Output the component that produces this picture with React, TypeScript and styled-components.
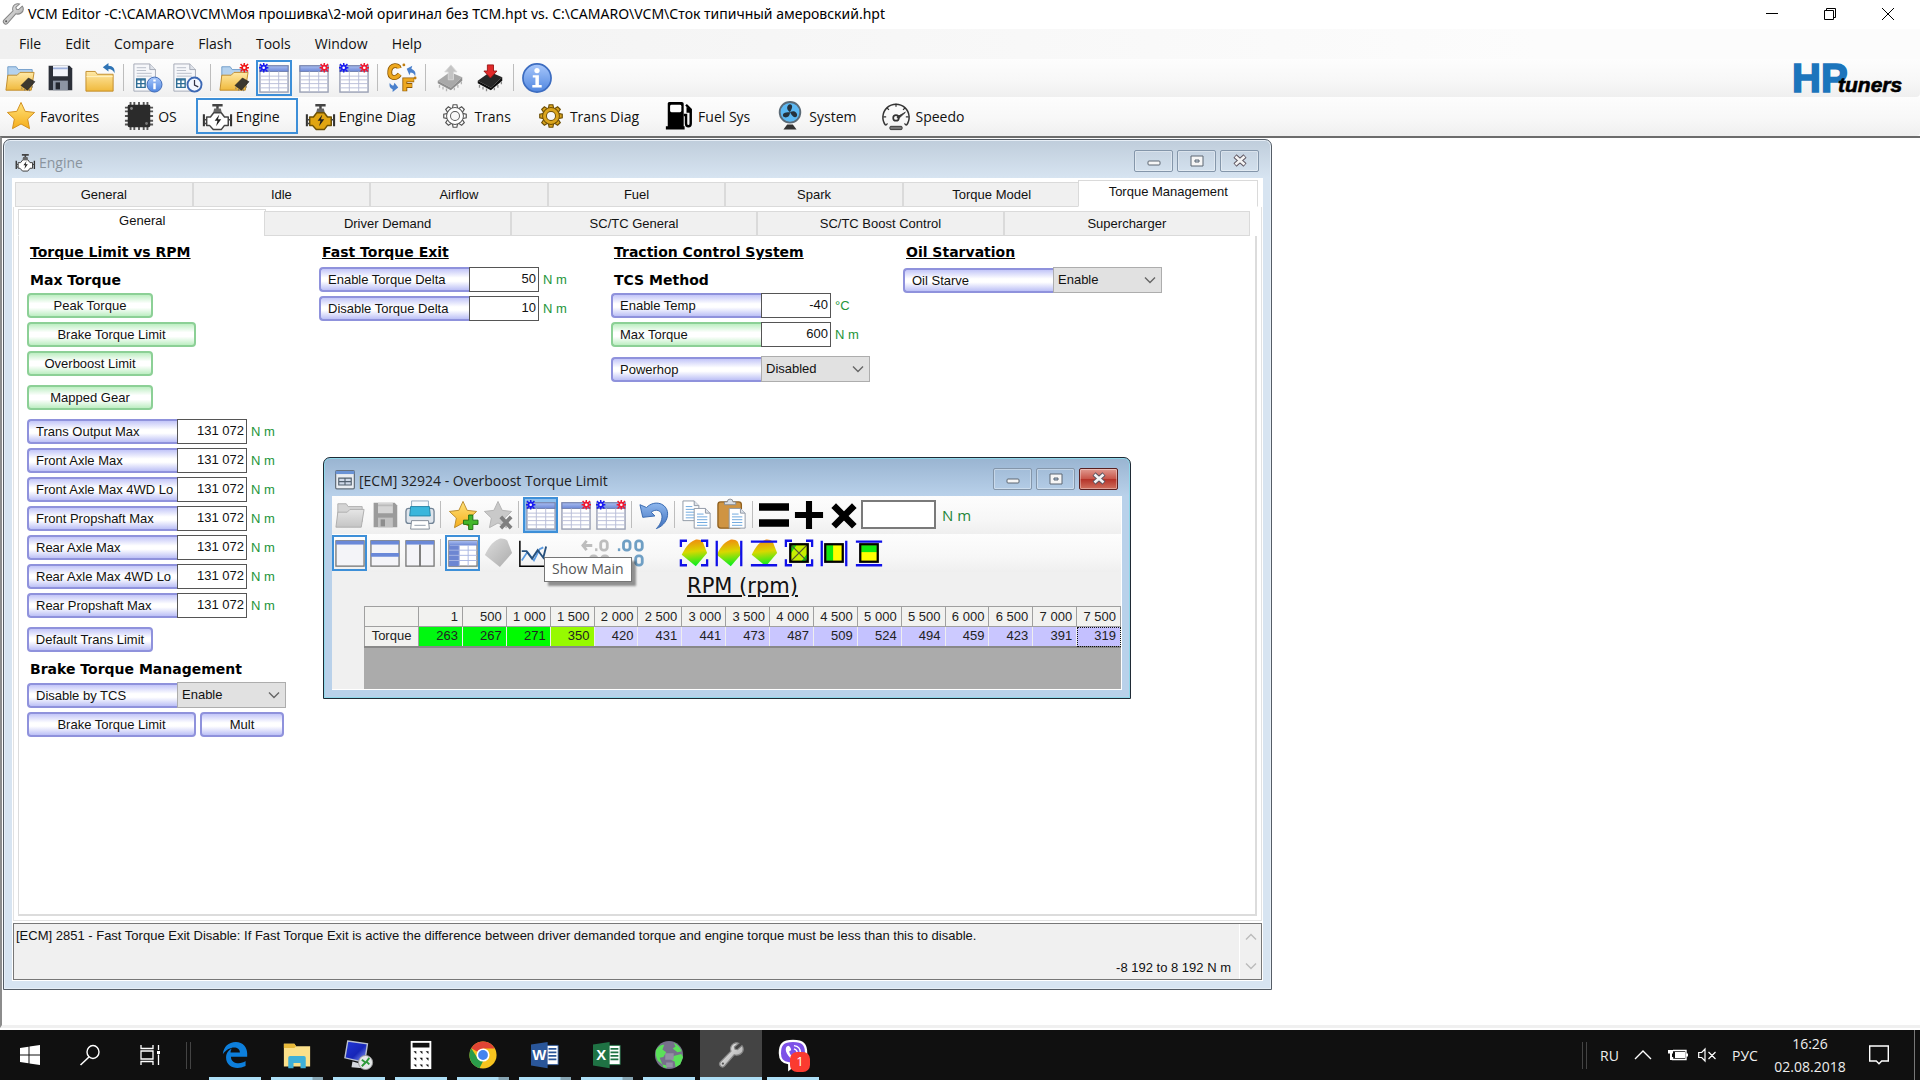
import React from "react";
import styled, { createGlobalStyle, css } from "styled-components";

const UI = '"Open Sans", "Noto Sans", sans-serif';
const ARIAL = '"Liberation Sans", Arial, sans-serif';
const HEAD = '"DejaVu Sans", Verdana, sans-serif';

const GlobalStyle = createGlobalStyle`
  *, *::before, *::after { box-sizing: border-box; }
  body { margin: 0; background: #fff; font-family: ${UI}; font-size: 14px; color: #111; }
  button, input, select { font: inherit; color: inherit; margin: 0; padding: 0; border: 0; background: none; border-radius: 0; }
  h1, h2, h3, p { margin: 0; font-weight: inherit; font-size: inherit; }
  svg { display: block; flex: none; overflow: visible; }
`;

/* ---------- icons ---------- */

type IconProps = { size?: number; children?: React.ReactNode; box?: string };
const Svg = ({ size = 30, box = "0 0 32 32", children }: IconProps) => (
  <svg width={size} height={size} viewBox={box} fill="none" aria-hidden="true">{children}</svg>
);

const Gradients = () => (
  <svg width="0" height="0" aria-hidden="true">
    <defs>
      <linearGradient id="fold" x1="0" y1="0" x2="0" y2="1"><stop offset="0" stopColor="#ffe9a6" /><stop offset="1" stopColor="#f0b93c" /></linearGradient>
      <linearGradient id="foldGray" x1="0" y1="0" x2="0" y2="1"><stop offset="0" stopColor="#e6e6e6" /><stop offset="1" stopColor="#c4c4c4" /></linearGradient>
      <linearGradient id="star" x1="0" y1="0" x2="0" y2="1"><stop offset="0" stopColor="#ffe27a" /><stop offset="1" stopColor="#f5ae1c" /></linearGradient>
      <linearGradient id="info" x1="0" y1="0" x2="0" y2="1"><stop offset="0" stopColor="#a9c8fb" /><stop offset="1" stopColor="#4f86e0" /></linearGradient>
      <linearGradient id="head" x1="0" y1="0" x2="0" y2="1"><stop offset="0" stopColor="#a9bdf0" /><stop offset="1" stopColor="#6d88d6" /></linearGradient>
      <linearGradient id="heat" x1="0.4" y1="0" x2="0.5" y2="1"><stop offset="0" stopColor="#f08a10" /><stop offset="0.45" stopColor="#d8d800" /><stop offset="1" stopColor="#00f020" /></linearGradient>
      <linearGradient id="gem" x1="0" y1="0" x2="1" y2="1"><stop offset="0" stopColor="#dcdcdc" /><stop offset="1" stopColor="#acacac" /></linearGradient>
      <linearGradient id="undo" x1="0" y1="0" x2="0" y2="1"><stop offset="0" stopColor="#8fb8ee" /><stop offset="1" stopColor="#3f70bd" /></linearGradient>
      <linearGradient id="metal" x1="0" y1="0" x2="1" y2="1"><stop offset="0" stopColor="#f4f4f4" /><stop offset="1" stopColor="#a0a0a0" /></linearGradient>
      <linearGradient id="screen" x1="0" y1="0" x2="1" y2="1"><stop offset="0" stopColor="#2338d8" /><stop offset="0.55" stopColor="#1726b8" /><stop offset="1" stopColor="#9fb4ff" /></linearGradient>
    </defs>
  </svg>
);

const Chiplet = ({ x = 16, y = 16 }) => (
  <g transform={`translate(${x} ${y})`}>
    <path d="M1 9 9 1l7 4-8 9z" fill="#2c2c2c" stroke="#111" strokeWidth="0.6" opacity="0.92" />
    <path d="M2 11v2M5 12.500v2M10 13v2M13 9.500v2" stroke="#777" />
  </g>
);
const FolderBase = ({ gray = false }: { gray?: boolean }) => (
  <g strokeLinejoin="round">
    <path d="M3 24V4h9l2 3h15v16z" fill={gray ? "#d4d4d4" : "#b5d2ee"} stroke={gray ? "#b0b0b0" : "#6f9cc9"} />
    <path d="M1 29 3 13h10l3-3h15l-3 19z" fill={gray ? "url(#foldGray)" : "url(#fold)"} stroke={gray ? "#adadad" : "#c08b2a"} />
  </g>
);
const Spark = ({ x, color }: { x: number; color: string }) => (
  <g transform={`translate(${x} 0)`} stroke={color}>
    <path d="M1 1 9 9M9 1 1 9M5 0v10M0 5h10" strokeWidth="1.600" />
    <rect x="2.500" y="2.500" width="5" height="5" fill={color} transform="rotate(45 5 5)" />
    <circle cx="5" cy="5" r="1.400" fill="#fff" stroke="none" />
  </g>
);
const OpenIcon = () => <Svg><FolderBase /><Chiplet x={16} y={15} /></Svg>;
const OpenCompareIcon = () => <Svg><FolderBase /><Chiplet x={16} y={15} /><Spark x={22} color="#f01818" /></Svg>;
const FolderGrayIcon = () => <Svg><FolderBase gray /></Svg>;
const FolderBackIcon = () => (
  <Svg>
    <path d="M1 30V9h10l2 3h17v18z" fill="url(#fold)" stroke="#c08b2a" strokeLinejoin="round" />
    <path d="M1.500 14.500h28" stroke="#fff3c8" />
    <path d="M19 4.500 25 0v3c5 0 7 3 6.500 8C30 7.500 28 6.500 25 6.500V9z" fill="#2f74b5" />
  </Svg>
);
const SaveIcon = ({ gray = false }: { gray?: boolean }) => (
  <Svg size={28}>
    <path d="M3 2h24l3 3v25H3z" fill={gray ? "#9b9b9b" : "#2b2f38"} />
    <path d="M8 2h17v12H8z" fill={gray ? "#d5d5d5" : "#f2f4fa"} />
    <path d="M8 5h17" stroke={gray ? "#bbb" : "#9db0dc"} strokeWidth="2" />
    <path d="M8 19h17v11H8z" fill={gray ? "#c2c2c2" : "#8d95a3"} />
    <path d="M11 21h5v8h-5z" fill={gray ? "#8e8e8e" : "#23262e"} />
  </Svg>
);
const DocBase = () => (
  <g>
    <path d="M2 1h17l6 6v23H2z" fill="#f6f7fa" stroke="#a3a9b4" />
    <path d="M19 1v6h6" fill="#dfe3ea" stroke="#a3a9b4" />
    <path d="M5 5h10M5 8h10M5 11h16M5 14h16" stroke="#b8bdc8" />
    <path d="M5 17h9v9H5z" fill="#fff" stroke="#2f6e96" strokeWidth="1.500" /><path d="M5 18h9M5 22h9M9.500 17v9" stroke="#2f6e96" strokeWidth="1.500" />
  </g>
);
const DocInfoIcon = () => (
  <Svg><DocBase /><circle cx="24" cy="23" r="8" fill="url(#info)" stroke="#3c68b4" /><path d="M24 21.500v6.500M24 17.500v2.300" stroke="#fff" strokeWidth="2.600" /></Svg>
);
const DocClockIcon = () => (
  <Svg><DocBase /><circle cx="24" cy="23" r="7.500" fill="#f3f7ff" stroke="#3c68b4" strokeWidth="2" /><path d="M24 18v5.500l4 2" stroke="#334" strokeWidth="1.300" /></Svg>
);
const TableIcon = ({ blue = false, red = false }: { blue?: boolean; red?: boolean }) => (
  <Svg>
    <rect x="1" y="3" width="30" height="28" fill="#fff" stroke="#9aa0b4" strokeWidth="1.500" />
    <rect x="1" y="3" width="30" height="6" fill="url(#head)" stroke="#6f7fae" />
    <path d="M1 14h30M1 18h30M1 22h30M1 26.500h30M11 9v22M21 9v22" stroke="#b7bdd8" />
    {blue && <Spark x={0} color="#1a1af0" />}
    {red && <Spark x={22} color="#f01830" />}
  </Svg>
);
const UnitsIcon = () => (
  <Svg>
    <path d="M13 5.500C12.500 2 4 1 3 8.500S9 18 13.500 12" stroke="#8f5a06" strokeWidth="5.200" />
    <path d="M13 5.500C12.500 2 4 1 3 8.500S9 18 13.500 12" stroke="#eda820" strokeWidth="3.400" />
    <path d="M19 30V18h10M19 24h8" stroke="#8f5a06" strokeWidth="5.200" />
    <path d="M19 29.500V18h9.500M19 24h7.500" stroke="#eda820" strokeWidth="3.400" />
    <path d="m21 6 6-3-1 3c4 2 5 4 4 8-1-3-3-4-5-4l-1 3z" fill="#4a80cc" />
    <path d="m12 26-6 5 0-3c-3-1-4-4-3-7 1 2 2 3 4 3l1-3z" fill="#4a80cc" />
    <circle cx="18" cy="2" r="1.500" fill="#c07d10" /><circle cx="30" cy="16" r="1.500" fill="#c07d10" />
  </Svg>
);
const ChipArrowIcon = ({ gray = false }: { gray?: boolean }) => (
  <Svg size={28}>
    <path d="M2 19 16 9l14 6-13 12z" fill={gray ? "#a9a9a9" : "#262626"} />
    <path d="m2 19 15 8v3L2 22zM30 15v4L17 30v-3z" fill={gray ? "#8e8e8e" : "#0d0d0d"} />
    <path d="M4 24v3M8 26v3M12 28v3M21 27v3M25 24v3M29 20v3" stroke={gray ? "#b5b5b5" : "#8a8a8a"} strokeWidth="1.500" />
    {gray
      ? <path d="M17 1 24 9h-4v9h-6V9h-4z" fill="#c4c4c4" stroke="#d8d8d8" />
      : <path d="M13 1h7v7h4l-7.500 8L9 8h4z" fill="#e02a2a" stroke="#981313" />}
  </Svg>
);
const InfoIcon = () => (
  <Svg>
    <circle cx="16" cy="16" r="15" fill="url(#info)" stroke="#3c6cc0" strokeWidth="1.800" />
    <circle cx="16" cy="8" r="2.800" fill="#fff" />
    <path d="M11.500 13H18v10.500h3V26h-10v-2.500h3.300V15.500h-2.800z" fill="#fff" />
  </Svg>
);
const STAR = "M16 1.500 20.400 11l10.100 1.200-7.400 7 2 10.300L16 24.500l-9.100 5 2-10.300-7.400-7L11.600 11z";
const StarIcon = () => <Svg><path d={STAR} fill="url(#star)" stroke="#d08d1c" strokeLinejoin="round" /></Svg>;
const StarAddIcon = () => (
  <Svg><path d={STAR} fill="url(#star)" stroke="#b98a2c" strokeLinejoin="round" /><path d="M22 16h4.500v5.500H32V26h-5.500v5.500H22V26h-5.500v-4.500H22z" fill="#43b72a" stroke="#1d6e12" /></Svg>
);
const StarRemoveIcon = () => (
  <Svg><path d={STAR} fill="#c9c9c9" stroke="#b2b2b2" strokeLinejoin="round" /><path d="m19 18 11 12M30 18 19 30" stroke="#7f7f7f" strokeWidth="4" /></Svg>
);
const CpuIcon = () => (
  <Svg>
    <path d="M7 1v30M11 1v30M16 1v30M21 1v30M25 1v30M1 7h30M1 11h30M1 16h30M1 21h30M1 25h30" stroke="#555" strokeWidth="2" />
    <rect x="4" y="4" width="24" height="24" rx="1.500" fill="#2b2b2b" />
    <circle cx="8" cy="8" r="1.500" fill="#888" /><circle cx="24" cy="24" r="1.500" fill="#777" />
  </Svg>
);
const EngineIcon = ({ gold = false, size = 30 }: { gold?: boolean; size?: number }) => (
  <Svg size={size}>
    <path d="M11 4.500h11M16.500 5v4" stroke="#444" strokeWidth="2.600" />
    <path d="M13 8h7l1 4h-9z" fill="#666" />
    <path d="M2 14v13M31 14v13" stroke="#333" strokeWidth="2.200" />
    <path d="M5 17h4l3.500-4.500h8L24 17h4v9h-4l-3.500 4.500H12L8 26H5z" fill={gold ? "#e0a512" : "#fff"} stroke={gold ? "#6b5006" : "#444"} strokeWidth="1.600" strokeLinejoin="round" />
    <path d="M2 20h3M28 20h3M2 24h3" stroke="#444" strokeWidth="1.600" />
    <path d="m18.500 14.500-5 6.500h3l-1.500 6 5.500-7.500H17z" fill="#222" />
  </Svg>
);
const teeth = [0, 45, 90, 135, 180, 225, 270, 315];
const GearIcon = ({ gold = false }: { gold?: boolean }) => (
  <Svg size={24}>
    {teeth.map((a) => (
      <path key={a} d="M12.500 6 13.500 1h5l1 5z" transform={`rotate(${a} 16 16)`} fill={gold ? "#dba51d" : "#fff"} stroke={gold ? "#6e5008" : "#555"} strokeWidth="1.600" />
    ))}
    <circle cx="16" cy="16" r="8.600" stroke={gold ? "#6e5008" : "#555"} strokeWidth="6.500" />
    <circle cx="16" cy="16" r="8.600" stroke={gold ? "#dba51d" : "#fff"} strokeWidth="4" />
  </Svg>
);
const FuelIcon = () => (
  <Svg>
    <path d="M4 2.500A2 2 0 0 1 6 1h13a2 2 0 0 1 2 2v24h1v3.500H2V27h2z" fill="#000" />
    <rect x="6.500" y="4" width="12" height="8" rx="1.500" fill="#fff" />
    <path d="M21 15h2.500v9c0 4 5 4 5 0V9l-5-5" stroke="#000" strokeWidth="2.600" />
    <path d="M24 6.500v6h5V9z" fill="#000" />
  </Svg>
);
const FanIcon = () => (
  <Svg>
    <circle cx="16" cy="12" r="11" fill="#5cb8f2" stroke="#5b6a76" strokeWidth="2" />
    {[0, 120, 240].map((a) => <path key={a} d="M16 12c-5-3-3-8 0-8.500 3 .5 3 3.500 0 8.500" transform={`rotate(${a} 16 12)`} fill="#26323c" />)}
    <path d="M13 25h6l4 5.500H9z" fill="#333" />
  </Svg>
);
const SpeedoIcon = () => (
  <Svg>
    <path d="M5 26A14 14 0 1 1 27 26" stroke="#333" strokeWidth="1.600" />
    <path d="M16 3v3M6.500 7.500l2 2M25.500 7.500l-2 2M2.500 17h3M29.500 17h-3M5 26l2-2M27 26l-2-2" stroke="#333" strokeWidth="1.300" />
    <circle cx="16" cy="18" r="3" stroke="#333" strokeWidth="1.800" /><path d="m17 17 9-5-7.500 7z" fill="#333" stroke="#333" />
    <rect x="9.500" y="27" width="13" height="3.500" rx="1" fill="#777" stroke="#333" />
  </Svg>
);
const WrenchIcon = ({ size = 22 }: { size?: number }) => (
  <Svg size={size}>
    <path d="M29.500 4.500 24 9.500l-3-.5-.8-3L25.500 1.500C21 0 16 2.500 15.500 7.500c-.2 1.500 0 2.700.5 3.800L3 24.500c-2 2-1 4 .2 5.200s3.300 2 5-.2L20 15.700c5 1.700 11-1.500 11-6.700 0-2-.5-3.500-1.500-4.500z" fill="url(#metal)" stroke="#858585" strokeWidth="1.500" />
    <circle cx="6" cy="26.500" r="1.400" fill="#555" />
  </Svg>
);
const PrinterIcon = () => (
  <Svg>
    <path d="M7 1h18v13H7z" fill="#f6f9fc" stroke="#93a9bc" />
    <rect x="1" y="9" width="30" height="16" rx="3" fill="#dfe5ec" stroke="#728496" strokeWidth="1.400" />
    <path d="M6 7h20l1 10H5z" fill="#3ab6dc" stroke="#2283a6" />
    <path d="M7 22h18l1 9H6z" fill="#fff" stroke="#7f8a96" /><path d="M10 27h12" stroke="#8d99a6" />
  </Svg>
);
const UndoIcon = () => (
  <Svg><path d="M1 5 4 18.500 17 17l-4-4c5-4 11-2 11.500 4 .3 5-2.500 10-6 13.500C26 28 31 21 30.500 14 30 4 17-1 8 8z" fill="url(#undo)" stroke="#3466ae" strokeLinejoin="round" /></Svg>
);
const Page = ({ x, y }: { x: number; y: number }) => (
  <g transform={`translate(${x} ${y})`}>
    <path d="M0 0h12l5 5v16H0z" fill="#fff" stroke="#8d96a3" /><path d="M12 0v5h5" fill="#dde3ea" stroke="#8d96a3" />
    <path d="M3 6h7M3 9h11M3 12h11M3 15h11M3 18h11" stroke="#6aa5dd" />
  </g>
);
const CopyIcon = () => <Svg><Page x={1} y={1} /><Page x={13} y={9} /></Svg>;
const PasteIcon = () => (
  <Svg>
    <rect x="1" y="2" width="25" height="28" rx="3" fill="#cf9442" stroke="#8e5f1e" strokeWidth="1.400" />
    <path d="M8 5V2h3a3 3 0 0 1 6 0h3v3z" fill="#d9dde3" stroke="#858b94" />
    <Page x={13} y={9} />
  </Svg>
);
const EqualsIcon = () => <Svg><path d="M0 7.500h32M0 24.500h32" stroke="#000" strokeWidth="8" /></Svg>;
const PlusIcon = () => <Svg><path d="M1 16h30M16 1v30" stroke="#000" strokeWidth="6.500" /></Svg>;
const TimesIcon = () => <Svg><path d="m5 6 22 22M27 6 5 28" stroke="#000" strokeWidth="7" /></Svg>;
const PaneIcon = ({ kind }: { kind: "one" | "rows" | "cols" }) => (
  <Svg>
    <rect x="1" y="3" width="30" height="27" fill="#f4f4f8" stroke="#777" strokeWidth="1.400" />
    <path d="M1 5h30" stroke="#6a88d8" strokeWidth="4" />
    {kind === "rows" && <path d="M1 18h30" stroke="#6a88d8" strokeWidth="4" />}
    {kind === "cols" && <path d="M16 7v23" stroke="#777" strokeWidth="2" />}
  </Svg>
);
const GridIcon = () => (
  <Svg>
    <rect x="1" y="3" width="30" height="27" fill="#fff" stroke="#777" strokeWidth="1.400" />
    <path d="M1 3h30v5H1z" fill="url(#head)" /><path d="M1 8h11v22H1z" fill="#6d86d2" />
    <path d="M1 13h30M1 18.500h30M1 24h30M12 8v22M21.500 8v22" stroke="#aab6e2" />
  </Svg>
);
const GEM = "M17 1c3-1 7 0 9 2l5 13-13 15L2 18C5 12 9 4 17 1z";
const GemIcon = () => <Svg><path d={GEM} fill="url(#gem)" /></Svg>;
const ChartIcon = () => (
  <Svg><path d="M2 3v27h28" stroke="#000" strokeWidth="1.600" /><path d="m4 24 6-9 7 9 6-12 4-2" stroke="#5a9ae0" strokeWidth="1.800" /><path d="m4 14 5 0 6 8 6-9 6 8 3-12" stroke="#27507c" strokeWidth="2" /></Svg>
);
const DecimalsIcon = ({ less = false }: { less?: boolean }) => (
  <Svg>
    {less ? (
      <g stroke="#bdbdbd" strokeWidth="3">
        <path d="M1 8h11M6 3 2 8l4 5" /><rect x="21" y="3" width="7" height="10" rx="3" /><path d="M15 12.500h2.500" />
        <rect x="10" y="19" width="7" height="10" rx="3" /><rect x="22" y="19" width="7" height="10" rx="3" />
      </g>
    ) : (
      <g stroke="#6f9fc4" strokeWidth="3">
        <path d="M2 12.500h2.500" /><rect x="8" y="3" width="7" height="10" rx="3" /><rect x="21" y="3" width="7" height="10" rx="3" />
        <rect x="21" y="19" width="7" height="10" rx="3" /><path d="M4 24h10" />
      </g>
    )}
  </Svg>
);
const corners = "M1 9V2h7M24 2h7v7M31 23v7h-7M8 30H1v-7";
const sides = "M2 2v29M30 2v29";
const ends = "M1 3h30M1 30h30";
const HeatIcon = ({ frame, square }: { frame: string; square?: "x" | "v" | "h" }) => (
  <Svg size={28}>
    {!square && <path d={GEM} fill="url(#heat)" />}
    {square && (
      <g>
        <rect x="6.500" y="6.500" width="19" height="19" fill={square === "x" ? "#c6f000" : "#ff0"} />
        {square === "v" && <path d="M7 7h8v18H7z" fill="#10e810" />}
        {square === "h" && <path d="M7 7h18v8H7z" fill="#10e810" />}
        {square === "x" && <g><path d="M7 7h6l-6 9zM25 25h-6l6-8z" fill="#10d810" /><path d="m7 7 18 18M25 7 7 25" stroke="#553" strokeWidth="1.500" /></g>}
        <rect x="6" y="6" width="20" height="20" stroke="#000" strokeWidth="2.600" />
      </g>
    )}
    <path d={frame} stroke="#1010e8" strokeWidth="2.600" />
  </Svg>
);
const FormIcon = () => (
  <Svg size={20}>
    <rect x="1" y="1" width="30" height="29" rx="2" fill="#e9edf2" stroke="#65707c" strokeWidth="2" />
    <path d="M1 4h30" stroke="#6a93d6" strokeWidth="5" />
    <path d="M6 13h20v11H6zM16 13v11M6 18.500h20" fill="#cfd9e8" stroke="#53616f" strokeWidth="1.800" />
  </Svg>
);
const Chevron = ({ up = false, color = "#666" }: { up?: boolean; color?: string }) => (
  <Svg size={12} box="0 0 12 12"><path d={up ? "M1 8.500 6 3.500l5 5" : "M1 3.500l5 5 5-5"} stroke={color} strokeWidth="1.400" /></Svg>
);

/* ---------- application shell ---------- */

const Shell = styled.div`
  height: 100vh;
  display: flex;
  flex-direction: column;
`;
const TitleBar = styled.header`
  height: 29px;
  flex: none;
  display: flex;
  align-items: center;
  padding: 0 3px 2px 2px;
  background: #fff;
  white-space: nowrap;
`;
const AppTitle = styled.h1`
  flex: 1;
  padding-left: 4px;
  font: 14px/20px "Noto Sans", "Open Sans", sans-serif;
  color: #000;
`;
const CaptionButton = styled.button`
  width: 58px;
  height: 27px;
  display: grid;
  place-items: center;
`;
const MenuBar = styled.nav`
  height: 30px;
  flex: none;
  display: flex;
  align-items: center;
  padding: 0 0 2px 7px;
  background: linear-gradient(90deg, #f0f0f0, #fcfcfc 80%);
`;
const MenuItem = styled.button`
  height: 28px;
  padding: 0 12px;
`;
const ToolStrip = styled.div<{ $height?: number }>`
  height: ${(p) => p.$height ?? 38}px;
  flex: none;
  display: flex;
  align-items: center;
  padding-bottom: 1px;
  background: linear-gradient(#fdfdfd, #f7f7f7 60%, #efefef);
  border-radius: 0 0 4px 0;
`;
const selectedTool = css`
  box-shadow: inset 0 0 0 2px #3d8fd8;
`;
const ToolButton = styled.button<{ $on?: boolean; $fill?: boolean; $wide?: boolean }>`
  width: ${(p) => (p.$wide ? 36 : 35)}px;
  height: 36px;
  margin: 0 ${(p) => (p.$wide ? 2 : 0)}px;
  display: grid;
  place-items: center;
  ${(p) => p.$on && selectedTool}
  ${(p) => p.$fill && "background: #8fc0ee;"}
`;
const Divider = styled.span<{ $tight?: boolean }>`
  width: 1px;
  height: 27px;
  margin: 0 ${(p) => (p.$tight ? 3 : 4)}px 0 3px;
  background: #bdbdbd;
`;
const Spacer = styled.span`
  width: 28px;
`;
const SectionButton = styled.button<{ $on?: boolean }>`
  height: 36px;
  display: flex;
  align-items: center;
  gap: 3px;
  padding: 0 18px 0 5px;
  margin-right: 1px;
  white-space: nowrap;
  ${(p) => p.$on && selectedTool}
`;
const IconBox = styled.span`
  width: 32px;
  display: grid;
  place-items: center;
`;
const Logo = styled.svg`
  margin-left: auto;
  margin-right: 15px;
`;
const Workspace = styled.main`
  flex: 1;
  min-height: 0;
  position: relative;
  overflow: hidden;
  background: #fff;
  border-top: 2px solid #6c6c6c;
  border-left: 2px solid #8c8c8c;
  border-bottom: 3px solid #f0f0f0;
`;

/* ---------- child windows ---------- */

const Frame = styled.section<{ $active?: boolean; $x: number; $y: number; $w: number; $h: number }>`
  position: absolute;
  left: ${(p) => p.$x}px;
  top: ${(p) => p.$y}px;
  width: ${(p) => p.$w}px;
  height: ${(p) => p.$h}px;
  display: flex;
  flex-direction: column;
  padding: 0 8px 8px;
  border: 1px solid ${(p) => (p.$active ? "#1f2a35" : "#555d66")};
  border-radius: 7px 7px 0 0;
  box-shadow: inset 0 0 0 1px ${(p) => (p.$active ? "#8fd8ea" : "#e6eef6")};
  background: ${(p) => (p.$active ? "linear-gradient(#99b4d1, #b9d1ea 38px)" : "linear-gradient(#bfcddb, #d7e4f1 38px)")};
`;
const FrameTitle = styled.div<{ $active?: boolean }>`
  height: 38px;
  flex: none;
  display: flex;
  align-items: center;
  gap: 4px;
  padding: 6px 4px 0 3px;
  color: ${(p) => (p.$active ? "#222" : "#8a949e")};
  h2 { flex: 1; }
`;
const FrameButton = styled.button<{ $close?: boolean }>`
  width: 39px;
  height: 22px;
  margin-bottom: 2px;
  display: grid;
  place-items: center;
  border: 1px solid #8496aa;
  border-radius: 2px;
  box-shadow: inset 0 0 0 1px rgba(255, 255, 255, 0.35);
  ${(p) => p.$close && "background: linear-gradient(#e09a90, #c8564a 48%, #b5342a 52%, #d0705e); border-color: #5a2020;"}
`;
const FrameBody = styled.div<{ $gray?: boolean }>`
  flex: 1;
  min-height: 0;
  display: flex;
  flex-direction: column;
  background: ${(p) => (p.$gray ? "#f0f0f0" : "#fff")};
  border: solid #fff;
  border-width: ${(p) => (p.$gray ? "0 1px 1px 0" : "1px")};
`;

const FrameControls = ({ active = false }: { active?: boolean }) => (
  <>
    <FrameButton aria-label="Minimize"><Svg size={14} box="0 0 14 14"><rect x="1" y="7" width="12" height="4" rx="1" fill="#f6f6f6" stroke="#5d6772" /></Svg></FrameButton>
    <FrameButton aria-label="Maximize"><Svg size={14} box="0 0 14 14"><path d="M1 2h12v10H1zM5 6v2h4V6z" fillRule="evenodd" fill="#f6f6f6" stroke="#5d6772" /></Svg></FrameButton>
    <FrameButton aria-label="Close" $close={active}><Svg size={14} box="0 0 14 14"><path d="m2 2 10 9M12 2 2 11" stroke="#5d5560" strokeWidth="4.600" /><path d="m2.500 2.500 9 8M11.500 2.500l-9 8" stroke="#f4f4f4" strokeWidth="2.600" /></Svg></FrameButton>
  </>
);

/* ---------- tabs ---------- */

const TabRow = styled.div<{ $pad: string }>`
  display: flex;
  align-items: flex-end;
  padding: ${(p) => p.$pad};
  font: 13px/20px ${ARIAL};
`;
const Tab = styled.button<{ $on?: boolean }>`
  flex: 1 1 ${(p) => (p.$on ? 4 : 0)}px;
  height: ${(p) => (p.$on ? 27 : 25)}px;
  margin: ${(p) => (p.$on ? "0 -2px" : "0")};
  padding-bottom: ${(p) => (p.$on ? 4 : 0)}px;
  background: ${(p) => (p.$on ? "#fff" : "#f0f0f0")};
  border: 1px solid #dadada;
  border-bottom-color: ${(p) => (p.$on ? "#fff" : "#dadada")};
  & + & { border-left-width: ${(p) => (p.$on ? 1 : 0)}px; }
`;
const OuterPanel = styled.div`
  flex: 1;
  min-height: 0;
  display: flex;
  flex-direction: column;
  padding: 2px 4px 4px;
  border: 1px solid #e2e2e2;
  border-top: 0;
`;
const InnerPanel = styled.div`
  flex: 1;
  display: grid;
  grid-template-columns: repeat(4, 292px);
  align-content: start;
  padding: 5px 8px;
  border: 1px solid #dcdcdc;
  border-right-width: 2px;
  border-bottom-width: 2px;
  border-top: 0;
`;

/* ---------- parameter controls ---------- */

const Group = styled.div`
  display: flex;
  flex-direction: column;
  align-items: flex-start;
  gap: 4px;
  font: 13px/20px ${ARIAL};
`;
const GroupTitle = styled.h3<{ $plain?: boolean }>`
  padding-left: 3px;
  font: bold 14px/${(p) => (p.$plain ? 17 : 22)}px ${HEAD};
  color: #000;
  text-decoration: ${(p) => (p.$plain ? "none" : "underline")};
`;
const Gap = styled.span`
  height: 1px;
`;
type Tone = { $green?: boolean };
const tone = css<Tone>`
  border: 2px solid ${(p) => (p.$green ? "#8cd096" : "#8f92dc")};
  background: ${(p) => (p.$green ? "linear-gradient(#bdeec2, #fff 40%, #fff 60%, #bdeec2)" : "linear-gradient(#c3c6f8, #fff 42%, #fff 58%, #bcc0f6)")};
`;
const ParamButton = styled.button<Tone & { $w: number }>`
  width: ${(p) => p.$w}px;
  height: 25px;
  border-radius: 4px;
  ${tone}
`;
const ParamRow = styled.div<{ $gap?: number }>`
  display: flex;
  align-items: center;
  gap: ${(p) => p.$gap ?? 0}px;
`;
const ParamLabel = styled.label<Tone>`
  width: 150px;
  height: 25px;
  padding-left: 7px;
  overflow: hidden;
  white-space: nowrap;
  border-radius: 4px 0 0 4px;
  line-height: 22px;
  ${tone}
  border-right: 0;
`;
const ParamInput = styled.input`
  width: 70px;
  height: 25px;
  padding: 0 2px 3px 0;
  text-align: right;
  border: 1px solid #555;
  background: #fff;
`;
const Unit = styled.span`
  padding-left: 4px;
  color: #23953a;
`;
const SelectBox = styled.div`
  display: grid;
  width: 109px;
  height: 26px;
  align-items: center;
  background: #e1e1e1;
  border: 1px solid #adadad;
  select, svg { grid-area: 1 / 1; }
  svg { justify-self: end; margin-right: 5px; pointer-events: none; }
`;
const SelectField = styled.select`
  appearance: none;
  width: 100%;
  height: 100%;
  padding-left: 4px;
`;

type ParamProps = { id: string; label: string; value: string; unit: string; green?: boolean };
const Param = ({ id, label, value, unit, green }: ParamProps) => (
  <ParamRow>
    <ParamLabel htmlFor={id} $green={green}>{label}</ParamLabel>
    <ParamInput id={id} defaultValue={value} />
    <Unit>{unit}</Unit>
  </ParamRow>
);
const Choice = ({ id, label, value }: { id: string; label: string; value: string }) => (
  <ParamRow>
    <ParamLabel htmlFor={id}>{label}</ParamLabel>
    <SelectBox>
      <SelectField id={id} defaultValue={value}><option>{value}</option></SelectField>
      <Chevron />
    </SelectBox>
  </ParamRow>
);

const InfoPane = styled.div`
  height: 57px;
  flex: none;
  display: flex;
  margin-top: 2px;
  border: 1px solid #777;
  background: #f0f0f0;
  font: 13px/20px ${ARIAL};
`;
const InfoText = styled.div`
  flex: 1;
  display: flex;
  flex-direction: column;
  justify-content: space-between;
  padding: 2px 8px 1px 2px;
  p + p { text-align: right; }
`;
const ScrollTrack = styled.div`
  width: 22px;
  display: flex;
  flex-direction: column;
  justify-content: space-between;
  align-items: center;
  padding: 7px 0;
  border-left: 1px solid #fff;
`;

/* ---------- table editor ---------- */

const ValueInput = styled.input`
  width: 75px;
  height: 29px;
  background: #fff;
  border: 2px solid #7a7a7a;
`;
const EditorUnit = styled.span`
  padding-left: 6px;
  font-size: 15px;
  color: #23853a;
`;
const AxisTitle = styled.h3`
  font: 21px/28px ${HEAD};
  text-align: center;
  text-decoration: underline;
  padding-left: 32px;
  height: 34px;
`;
const GridArea = styled.div`
  flex: 1;
  margin-left: 32px;
  background: #ababab;
`;
const DataGrid = styled.table`
  width: 100%;
  table-layout: fixed;
  border-collapse: collapse;
  border-bottom: 2px solid #888;
  font: 13px/18px ${ARIAL};
  color: #222;
  white-space: nowrap;
  th, td { height: 20px; padding: 0 4px 0 0; text-align: right; font-weight: normal; }
  th { background: #f2f2f0; border: 1px solid #a0a0a0; }
  th:first-child { width: 54px; padding: 0; text-align: center; }
  td { border-right: 1px solid #eee; }
`;
const Cell = styled.td<{ $c: string; $focus?: boolean }>`
  background: ${(p) => p.$c};
  ${(p) => p.$focus && "outline: 1px dotted #111; outline-offset: -1px;"}
`;
const Tooltip = styled.div`
  position: absolute;
  left: 220px;
  top: 99px;
  height: 25px;
  padding: 0 7px;
  line-height: 22px;
  color: #575757;
  background: #fff;
  border: 1px solid #767676;
  box-shadow: 4px 4px 2px rgba(0, 0, 0, 0.4);
`;

const points: [string, string, string][] = [
  ["1", "263", "#00f810"], ["500", "267", "#00f80c"], ["1 000", "271", "#00fb00"], ["1 500", "350", "#96fa00"],
  ["2 000", "420", "#d4d2ff"], ["2 500", "431", "#d2d0ff"], ["3 000", "441", "#d0ceff"], ["3 500", "473", "#cbc8ff"],
  ["4 000", "487", "#c9c6ff"], ["4 500", "509", "#c6c4ff"], ["5 000", "524", "#c4c2ff"], ["5 500", "494", "#c8c5ff"],
  ["6 000", "459", "#cccaff"], ["6 500", "423", "#c9c6ff"], ["7 000", "391", "#c7c4ff"], ["7 500", "319", "#c4c0ff"],
];

/* ---------- taskbar ---------- */

const Taskbar = styled.footer`
  height: 50px;
  flex: none;
  display: flex;
  align-items: stretch;
  margin-top: 2px;
  background: #101010;
  color: #eee;
`;
const SystemButton = styled.button`
  width: 60px;
  display: grid;
  place-items: center;
`;
const Grip = styled.span`
  width: 5px;
  height: 27px;
  align-self: center;
  margin: 0 13px 0 6px;
  border: solid #444;
  border-width: 0 1px;
`;
const TaskButton = styled.button<{ $active?: boolean; $stack?: boolean }>`
  width: 62px;
  display: grid;
  place-items: center;
  position: relative;
  background: ${(p) => (p.$active ? "#444" : "none")};
  &::after {
    content: "";
    position: absolute;
    left: ${(p) => (p.$active ? 0 : 5)}px;
    right: ${(p) => (p.$active ? 0 : 5)}px;
    bottom: 0;
    height: 3px;
    background: ${(p) => (p.$stack ? "linear-gradient(90deg, #addff6 41px, #87a5b3 42px)" : "#addff6")};
  }
`;
const Badge = styled.span`
  position: absolute;
  left: 28px;
  top: 22px;
  width: 20px;
  height: 20px;
  border-radius: 7px;
  background: #fb3b30;
  color: #fff;
  font: 13px/18px ${UI};
`;
const Tray = styled.div`
  margin-left: auto;
  display: flex;
  align-items: center;
  white-space: nowrap;
`;
const TrayButton = styled.button<{ $w: number }>`
  width: ${(p) => p.$w}px;
  height: 50px;
  display: grid;
  place-items: center;
`;
const Clock = styled.time`
  width: 92px;
  line-height: 23px;
  text-align: center;
`;
const ShowDesktop = styled.button`
  width: 6px;
  height: 50px;
  margin-left: 12px;
  border-left: 1px solid #777;
`;

const StartIcon = () => <Svg size={20} box="0 0 20 20"><path d="M0 3 8.500 1.800V9.500H0zM9.500 1.600 20 0v9.500H9.500zM0 10.500h8.500v7.700L0 17zM9.500 10.500H20V20L9.500 18.400z" fill="#fff" /></Svg>;
const SearchIcon = () => <Svg size={20} box="0 0 20 20"><ellipse cx="13" cy="7" rx="6" ry="6.500" stroke="#fff" strokeWidth="1.400" /><path d="M9 12 .5 20" stroke="#fff" strokeWidth="1.600" /></Svg>;
const TaskViewIcon = () => <Svg size={20} box="0 0 20 20"><path d="M1 0v3.500h12V0M1 20v-3.500h12V20M1 6h12v8H1zM18.500 0v5M18.500 9.500V20" stroke="#fff" strokeWidth="1.300" /><path d="M17 6h3v3h-3z" fill="#fff" /></Svg>;
const EdgeIcon = () => <Svg size={26}><path d="M1 15C2 6 8 0 17 0c9 0 14 7 14 14v4H11c0 9 12 10 18 5.500v6C18 35 5 31 5 19c0-5 3-9 7-11-1 2-1.500 3-1.500 5H22c0-8-13-9-21 2z" fill="#0d7fdc" /></Svg>;
const ExplorerIcon = () => <Svg size={28}><path d="M1 3h12l2 3h16v23H1z" fill="#fbe08a" /><path d="M1 3h12l2 3-2 2H1z" fill="#e8b93a" /><path d="M6 31V19a2 2 0 0 1 2-2h16a2 2 0 0 1 2 2v12h-6v-6h-8v6z" fill="#3fb0d8" /></Svg>;
const RemoteIcon = () => <Svg><path d="m4 1 21 3-3 20L1 19z" fill="url(#screen)" stroke="#b9c0d0" strokeWidth="1.500" /><path d="M9 23 17 25l3 5-12-1z" fill="#d5d8de" /><circle cx="23" cy="24" r="7.500" fill="#e6e8ea" stroke="#999" /><path d="m19 21 4 3-4 4M27 19l-3 4 3 3" stroke="#2e9a3a" strokeWidth="2" /></Svg>;
const CalcIcon = () => <Svg><path d="M5 1h22v30H5z" fill="#fff" /><path d="M7 3h18v5H7z" fill="#111" />{[12, 19, 26].map((y) => [8, 14.5, 21].map((x) => <path key={x + "-" + y} d={`M${x} ${y}h3v3z`} fill="#111" />))}</Svg>;
const ChromeIcon = () => <Svg size={28}><circle cx="16" cy="16" r="15.500" fill="#f7c41f" /><path d="M16 16 2.600 8.200A15.500 15.500 0 0 1 29.500 8.500H16z" fill="#e04434" /><path d="M2.600 8.200 10 20l6 3-4 8A15.500 15.500 0 0 1 2.600 8.200z" fill="#2a9c4a" /><circle cx="16" cy="16" r="7.500" fill="#fff" /><circle cx="16" cy="16" r="5.600" fill="#4484f0" /></Svg>;
const OfficeIcon = ({ letter, color }: { letter: string; color: string }) => (
  <Svg size={28}><path d="M17 5h14v22H17z" fill="#fff" stroke={color} /><path d="M20 9h9M20 13h9M20 17h9M20 21h9" stroke={color} strokeWidth="2" /><path d="m0 4 19-3v30L0 28z" fill={color} /><text x="9.500" y="22" textAnchor="middle" fontFamily="Liberation Sans" fontWeight="bold" fontSize="17" fill="#fff">{letter}</text></Svg>
);
const GlobeIcon = () => <Svg><circle cx="16" cy="16" r="15" fill="#77708c" /><path d="M2 11c2-4 5-6 9-6l-2 5 4 3-3 5-4 1 3 7-5-4c-2-4-2.500-7-2-11zM21 3c4 2 7 5 8.500 9L25 13l-5-4 3-2zM21 17l8-2 2 3-3 8-5 3-1-6-4-2zM9 26l4 1 1 3-4-1z" fill="#5be05a" /><path d="M12 14h9v7h-9zM13 24h7v5h-7z" fill="#948fa5" /></Svg>;
const ViberIcon = () => <Svg><path d="M16 1c11 0 14 4 14 13s-3 12-12 12l-6 5v-6C4 24 2 20 2 14 2 5 5 1 16 1z" fill="#7d51e8" stroke="#fff" strokeWidth="2.400" /><path d="M11 6c-5 1-3 10 5 15 4 2 7-1 5-3l-3-2-2 2c-2-1-4-4-4-6l2-1c0-2-1-4-3-5z" fill="#fff" /><path d="M17 6c4 .5 7 3 7 8M17 9.500c2 .5 3.500 2 3.500 4.500" stroke="#fff" strokeWidth="1.500" /></Svg>;

export default function App() {
  return (
    <Shell>
      <GlobalStyle />
      <TitleBar>
        <WrenchIcon />
        <AppTitle>VCM Editor -C:\CAMARO\VCM\Моя прошивка\2-мой оригинал без TCM.hpt vs. C:\CAMARO\VCM\Сток типичный амеровский.hpt</AppTitle>
        <CaptionButton aria-label="Minimize"><Svg size={12} box="0 0 12 12"><path d="M0 5.500h12" stroke="#000" /></Svg></CaptionButton>
        <CaptionButton aria-label="Restore"><Svg size={12} box="0 0 12 12"><path d="M.5 2.500h9v9h-9zM2.500 2.500v-2h9v9h-2" stroke="#000" /></Svg></CaptionButton>
        <CaptionButton aria-label="Close"><Svg size={12} box="0 0 12 12"><path d="m0 0 12 12M12 0 0 12" stroke="#000" /></Svg></CaptionButton>
      </TitleBar>
      <MenuBar>
        {["File", "Edit", "Compare", "Flash", "Tools", "Window", "Help"].map((m) => <MenuItem key={m}>{m}</MenuItem>)}
      </MenuBar>
      <ToolStrip>
        <ToolButton $wide aria-label="Open"><OpenIcon /></ToolButton>
        <ToolButton $wide aria-label="Save"><SaveIcon /></ToolButton>
        <ToolButton $wide aria-label="Close file"><FolderBackIcon /></ToolButton>
        <Divider $tight />
        <ToolButton $wide aria-label="File info"><DocInfoIcon /></ToolButton>
        <ToolButton $wide aria-label="History"><DocClockIcon /></ToolButton>
        <Divider $tight />
        <ToolButton $wide aria-label="Open compare"><OpenCompareIcon /></ToolButton>
        <ToolButton $wide $on aria-label="Show main file"><TableIcon blue /></ToolButton>
        <ToolButton $wide aria-label="Show compare file"><TableIcon red /></ToolButton>
        <ToolButton $wide aria-label="Show difference"><TableIcon blue red /></ToolButton>
        <Divider />
        <ToolButton $wide aria-label="Units"><UnitsIcon /></ToolButton>
        <Divider />
        <ToolButton $wide disabled aria-label="Read vehicle"><ChipArrowIcon gray /></ToolButton>
        <ToolButton $wide aria-label="Write vehicle"><ChipArrowIcon /></ToolButton>
        <Divider $tight />
        <ToolButton $wide aria-label="Info"><InfoIcon /></ToolButton>
        <Logo width="112" height="34" viewBox="0 0 112 34" role="img" aria-label="HP tuners">
          <text x="-1" y="31" fontFamily="Liberation Sans" fontWeight="bold" fontSize="40" fill="#1c75bc" stroke="#1c75bc" strokeWidth="1.600">HP</text>
          <text x="45" y="31" fontFamily="Liberation Sans" fontWeight="bold" fontStyle="italic" fontSize="21" fill="#000" stroke="#000" strokeWidth="0.600">tuners</text>
        </Logo>
      </ToolStrip>
      <ToolStrip $height={39}>
        <SectionButton><IconBox><StarIcon /></IconBox>Favorites</SectionButton>
        <SectionButton><IconBox><CpuIcon /></IconBox>OS</SectionButton>
        <SectionButton $on><IconBox><EngineIcon /></IconBox>Engine</SectionButton>
        <SectionButton><IconBox><EngineIcon gold /></IconBox>Engine Diag</SectionButton>
        <SectionButton><IconBox><GearIcon /></IconBox>Trans</SectionButton>
        <SectionButton><IconBox><GearIcon gold /></IconBox>Trans Diag</SectionButton>
        <SectionButton><IconBox><FuelIcon /></IconBox>Fuel Sys</SectionButton>
        <SectionButton><IconBox><FanIcon /></IconBox>System</SectionButton>
        <SectionButton><IconBox><SpeedoIcon /></IconBox>Speedo</SectionButton>
      </ToolStrip>

      <Workspace>
        <Frame $x={1} $y={1} $w={1269} $h={851}>
          <FrameTitle>
            <EngineIcon size={20} />
            <h2>Engine</h2>
            <FrameControls />
          </FrameTitle>
          <FrameBody>
            <TabRow $pad="1px 6px 0 2px">
              {["General", "Idle", "Airflow", "Fuel", "Spark", "Torque Model"].map((t) => <Tab key={t}>{t}</Tab>)}
              <Tab $on>Torque Management</Tab>
            </TabRow>
            <OuterPanel>
              <TabRow $pad="0 7px 0 2px">
                <Tab $on>General</Tab>
                {["Driver Demand", "SC/TC General", "SC/TC Boost Control", "Supercharger"].map((t) => <Tab key={t}>{t}</Tab>)}
              </TabRow>
              <InnerPanel>
                <Group>
                  <GroupTitle>Torque Limit vs RPM</GroupTitle>
                  <Gap />
                  <GroupTitle $plain>Max Torque</GroupTitle>
                  <ParamButton $green $w={126}>Peak Torque</ParamButton>
                  <ParamButton $green $w={169}>Brake Torque Limit</ParamButton>
                  <ParamButton $green $w={126}>Overboost Limit</ParamButton>
                  <Gap />
                  <ParamButton $green $w={126}>Mapped Gear</ParamButton>
                  <Gap />
                  {["Trans Output Max", "Front Axle Max", "Front Axle Max 4WD Lo", "Front Propshaft Max", "Rear Axle Max", "Rear Axle Max 4WD Lo", "Rear Propshaft Max"].map((l, i) => (
                    <Param key={l} id={`limit-${i}`} label={l} value="131 072" unit="N m" />
                  ))}
                  <Gap />
                  <ParamButton $w={126}>Default Trans Limit</ParamButton>
                  <Gap />
                  <GroupTitle $plain>Brake Torque Management</GroupTitle>
                  <Choice id="disable-tcs" label="Disable by TCS" value="Enable" />
                  <ParamRow $gap={4}>
                    <ParamButton $w={169}>Brake Torque Limit</ParamButton>
                    <ParamButton $w={84}>Mult</ParamButton>
                  </ParamRow>
                </Group>
                <Group>
                  <GroupTitle>Fast Torque Exit</GroupTitle>
                  <Param id="enable-delta" label="Enable Torque Delta" value="50" unit="N m" />
                  <Param id="disable-delta" label="Disable Torque Delta" value="10" unit="N m" />
                </Group>
                <Group>
                  <GroupTitle>Traction Control System</GroupTitle>
                  <Gap />
                  <GroupTitle $plain>TCS Method</GroupTitle>
                  <Param id="enable-temp" label="Enable Temp" value="-40" unit="°C" />
                  <Param id="max-torque" label="Max Torque" value="600" unit="N m" green />
                  <Gap />
                  <Choice id="powerhop" label="Powerhop" value="Disabled" />
                </Group>
                <Group>
                  <GroupTitle>Oil Starvation</GroupTitle>
                  <Choice id="oil-starve" label="Oil Starve" value="Enable" />
                </Group>
              </InnerPanel>
            </OuterPanel>
            <InfoPane>
              <InfoText>
                <p>[ECM] 2851 - Fast Torque Exit Disable: If Fast Torque Exit is active the difference between driver demanded torque and engine torque must be less than this to disable.</p>
                <p>-8 192 to 8 192 N m</p>
              </InfoText>
              <ScrollTrack><Chevron up color="#bbb" /><Chevron color="#bbb" /></ScrollTrack>
            </InfoPane>
          </FrameBody>
        </Frame>

        <Frame $active $x={321} $y={319} $w={808} $h={242}>
          <FrameTitle $active>
            <FormIcon />
            <h2>[ECM] 32924 - Overboost Torque Limit</h2>
            <FrameControls active />
          </FrameTitle>
          <FrameBody $gray>
            <ToolStrip>
              <ToolButton disabled aria-label="Open"><FolderGrayIcon /></ToolButton>
              <ToolButton disabled aria-label="Save"><SaveIcon gray /></ToolButton>
              <ToolButton aria-label="Print"><PrinterIcon /></ToolButton>
              <Divider />
              <ToolButton aria-label="Add favorite"><StarAddIcon /></ToolButton>
              <ToolButton disabled aria-label="Remove favorite"><StarRemoveIcon /></ToolButton>
              <Divider />
              <ToolButton $on $fill aria-label="Show Main"><TableIcon blue /></ToolButton>
              <ToolButton aria-label="Show Compare"><TableIcon red /></ToolButton>
              <ToolButton aria-label="Show Difference"><TableIcon blue red /></ToolButton>
              <Divider />
              <ToolButton aria-label="Undo"><UndoIcon /></ToolButton>
              <Divider />
              <ToolButton aria-label="Copy"><CopyIcon /></ToolButton>
              <ToolButton aria-label="Paste"><PasteIcon /></ToolButton>
              <Divider $tight />
              <ToolButton aria-label="Set value"><EqualsIcon /></ToolButton>
              <ToolButton aria-label="Add value"><PlusIcon /></ToolButton>
              <ToolButton aria-label="Multiply value"><TimesIcon /></ToolButton>
              <ValueInput aria-label="Value" />
              <EditorUnit>N m</EditorUnit>
            </ToolStrip>
            <ToolStrip>
              <ToolButton $on aria-label="Single pane"><PaneIcon kind="one" /></ToolButton>
              <ToolButton aria-label="Split rows"><PaneIcon kind="rows" /></ToolButton>
              <ToolButton aria-label="Split columns"><PaneIcon kind="cols" /></ToolButton>
              <Divider />
              <ToolButton $on aria-label="Table view"><GridIcon /></ToolButton>
              <ToolButton disabled aria-label="Surface view"><GemIcon /></ToolButton>
              <ToolButton aria-label="Chart view"><ChartIcon /></ToolButton>
              <Spacer />
              <ToolButton disabled aria-label="Fewer decimals"><DecimalsIcon less /></ToolButton>
              <ToolButton aria-label="More decimals"><DecimalsIcon /></ToolButton>
              <Spacer />
              <ToolButton aria-label="Interpolate surface"><HeatIcon frame={corners} /></ToolButton>
              <ToolButton aria-label="Interpolate horizontal"><HeatIcon frame={sides} /></ToolButton>
              <ToolButton aria-label="Interpolate vertical"><HeatIcon frame={ends} /></ToolButton>
              <ToolButton aria-label="Smooth surface"><HeatIcon frame={corners} square="x" /></ToolButton>
              <ToolButton aria-label="Smooth horizontal"><HeatIcon frame={sides} square="v" /></ToolButton>
              <ToolButton aria-label="Smooth vertical"><HeatIcon frame={ends} square="h" /></ToolButton>
            </ToolStrip>
            <AxisTitle>RPM (rpm)</AxisTitle>
            <GridArea>
              <DataGrid>
                <thead>
                  <tr><th />{points.map((p) => <th key={p[0]} scope="col">{p[0]}</th>)}</tr>
                </thead>
                <tbody>
                  <tr>
                    <th scope="row">Torque</th>
                    {points.map((p, i) => <Cell key={p[0]} $c={p[2]} $focus={i === points.length - 1}>{p[1]}</Cell>)}
                  </tr>
                </tbody>
              </DataGrid>
            </GridArea>
          </FrameBody>
          <Tooltip role="tooltip">Show Main</Tooltip>
        </Frame>
      </Workspace>

      <Taskbar>
        <SystemButton aria-label="Start"><StartIcon /></SystemButton>
        <SystemButton aria-label="Search"><SearchIcon /></SystemButton>
        <SystemButton aria-label="Task view"><TaskViewIcon /></SystemButton>
        <Grip />
        <TaskButton aria-label="Edge"><EdgeIcon /></TaskButton>
        <TaskButton $stack aria-label="Explorer"><ExplorerIcon /></TaskButton>
        <TaskButton aria-label="Remote Desktop"><RemoteIcon /></TaskButton>
        <TaskButton aria-label="Calculator"><CalcIcon /></TaskButton>
        <TaskButton $stack aria-label="Chrome"><ChromeIcon /></TaskButton>
        <TaskButton $stack aria-label="Word"><OfficeIcon letter="W" color="#2a5699" /></TaskButton>
        <TaskButton $stack aria-label="Excel"><OfficeIcon letter="X" color="#1f7244" /></TaskButton>
        <TaskButton aria-label="Network"><GlobeIcon /></TaskButton>
        <TaskButton $active aria-label="VCM Editor"><WrenchIcon size={26} /></TaskButton>
        <TaskButton aria-label="Viber"><ViberIcon /><Badge>1</Badge></TaskButton>
        <Tray>
          <Grip />
          <TrayButton $w={18}>RU</TrayButton>
          <TrayButton $w={50} aria-label="Hidden icons"><Svg size={16} box="0 0 16 16"><path d="m0 12 8-8 8 8" stroke="#fff" strokeWidth="1.400" /></Svg></TrayButton>
          <TrayButton $w={20} aria-label="Battery"><Svg size={20} box="0 0 20 20"><path d="M5 5.500h13v9H4.500V12" stroke="#fff" strokeWidth="1.400" /><path d="M7 7h10v6H7zM18 8.500h2v3h-2zM0 5h5v3.500H4V15H2V8.500H0z" fill="#fff" /></Svg></TrayButton>
          <TrayButton $w={38} aria-label="Volume"><Svg size={18} box="0 0 18 18"><path d="M.7 6.500h3L7 3v12l-3.300-3.500h-3zM10.500 6l7 7M17.500 6l-7 7" stroke="#fff" strokeWidth="1.200" /></Svg></TrayButton>
          <TrayButton $w={38}>РУС</TrayButton>
          <Clock dateTime="2018-08-02T16:26">16:26<br />02.08.2018</Clock>
          <TrayButton $w={46} aria-label="Notifications"><Svg size={20} box="0 0 20 20"><path d="M.7 1h18.600v15h-6.600l-2.700 2.700L7.300 16H.7z" stroke="#fff" strokeWidth="1.400" /></Svg></TrayButton>
          <ShowDesktop aria-label="Show desktop" />
        </Tray>
      </Taskbar>
      <Gradients />
    </Shell>
  );
}
